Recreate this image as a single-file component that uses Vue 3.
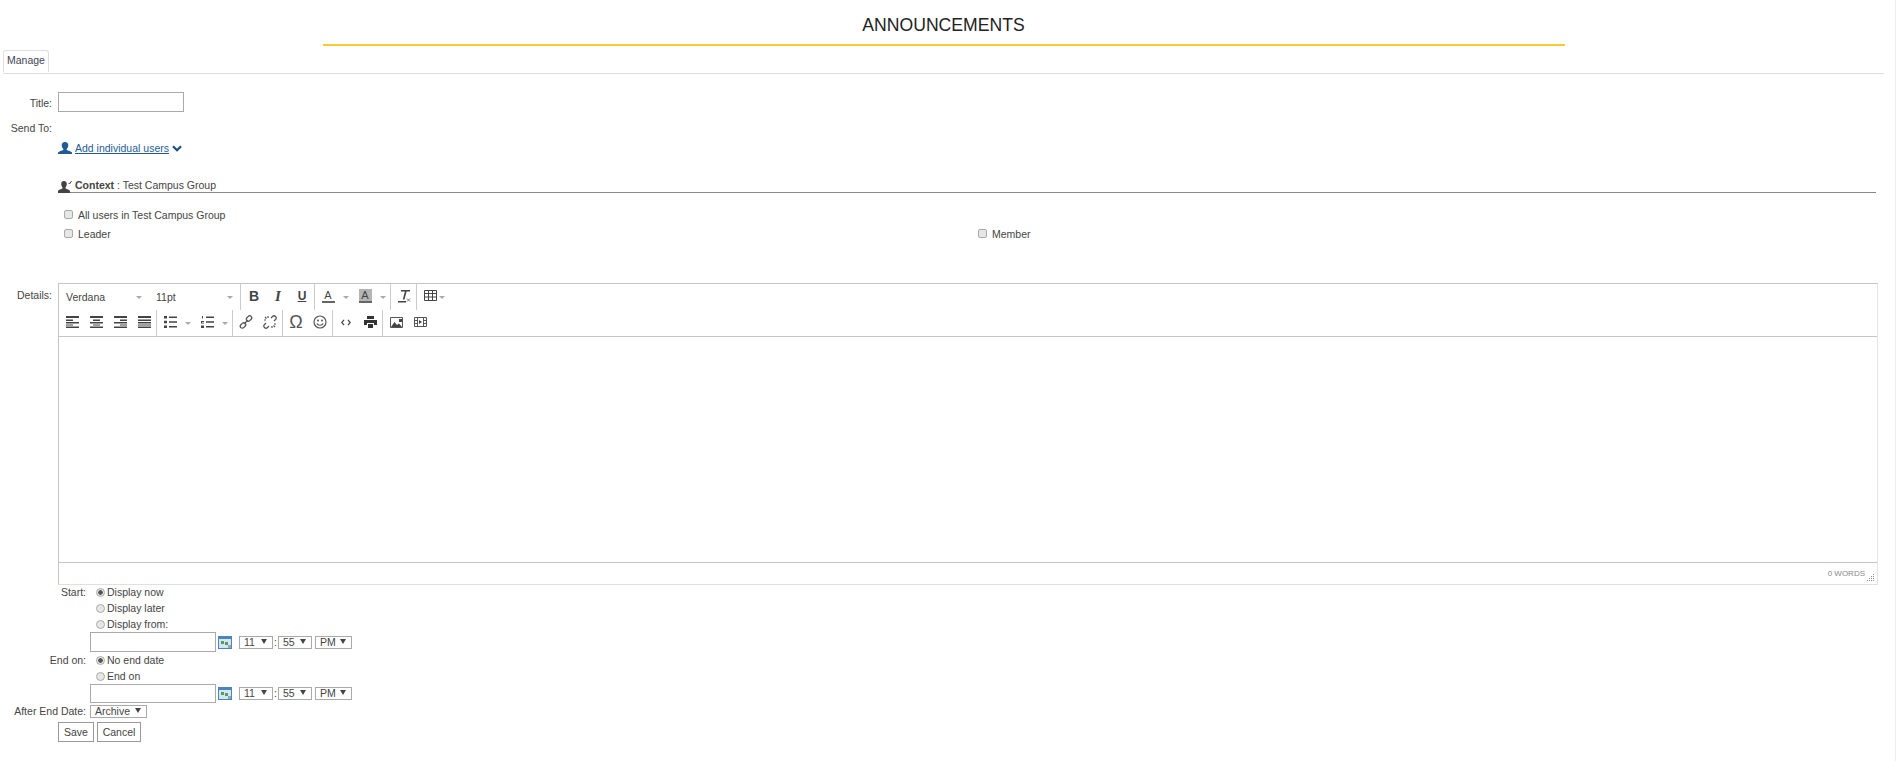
<script setup>
</script>

<template>
  <div class="page">
    <header class="head">
      <h1>ANNOUNCEMENTS</h1>
      <div class="rule"></div>
    </header>
    <nav class="tabs"><a class="tab">Manage</a></nav>

    <div class="row title-row">
      <label class="lab">Title:</label>
      <input class="title-input" type="text" />
    </div>
    <div class="row send-row"><label class="lab">Send To:</label></div>

    <div class="indent add-users">
      <svg class="ico-user" viewBox="0 0 14 12" width="14" height="12"><path fill="#1f5c94" d="M7 0c2.200 0 3.300 1.300 3.300 3.200 0 1.500-.8 3-1.600 3.700v1.100c1.500.6 4.300 1.200 5.300 2.600V12H0v-1.400c1-1.400 3.800-2 5.300-2.600V6.900C4.500 6.200 3.700 4.700 3.700 3.200 3.700 1.300 4.800 0 7 0z"/></svg>
      <a class="link">Add individual users</a>
      <svg class="chev" viewBox="0 0 10 7" width="10" height="7"><path fill="none" stroke="#1f4e79" stroke-width="2.200" d="M1 1.200l4 4 4-4"/></svg>
    </div>

    <div class="indent context">
      <svg class="ico-ctx" viewBox="0 0 14 13" width="14" height="13"><path fill="#444" d="M6 1c1.800 0 2.800 1.200 2.800 3 0 1.400-.6 2.800-1.300 3.400v1.100c1.400.6 3.800 1.100 4.500 2.400V13H0v-2.100c.7-1.300 3.100-1.800 4.500-2.400V7.400C3.800 6.800 3.200 5.400 3.200 4 3.200 2.200 4.200 1 6 1z"/><path fill="none" stroke="#444" stroke-width="1" d="M10.500 3l1 1 2-3"/></svg>
      <span><b>Context</b> : Test Campus Group</span>
    </div>

    <div class="checks">
      <label class="chk all"><input type="checkbox" /><span>All users in Test Campus Group</span></label>
      <div class="chk-grid">
        <label class="chk"><input type="checkbox" /><span>Leader</span></label>
        <label class="chk"><input type="checkbox" /><span>Member</span></label>
      </div>
    </div>

    <div class="row details-row">
      <label class="lab det">Details:</label>
      <div class="editor">
        <div class="tb">
          <div class="tb-row">
            <div class="grp fonts">
              <span class="fsel w-font">Verdana<i class="caret"></i></span>
              <span class="fsel w-size">11pt<i class="caret"></i></span>
            </div>
            <div class="grp">
              <button class="tbtn"><b class="g-b">B</b></button>
              <button class="tbtn"><em class="g-i">I</em></button>
              <button class="tbtn"><u class="g-u">U</u></button>
            </div>
            <div class="grp">
              <button class="tbtn"><span class="g-a">A</span></button><i class="caret c2"></i>
              <button class="tbtn"><span class="g-a bg">A</span></button><i class="caret c2"></i>
            </div>
            <div class="grp">
              <button class="tbtn">
                <svg viewBox="0 0 14 14" width="14" height="14"><path fill="#444" d="M4 1h9v1.500H9.600L7.500 10.500H5.800L7.900 2.500H4zM1 12h8v1.400H1z"/><path stroke="#777" stroke-width="1" d="M10 9.500l3 3m0-3l-3 3"/></svg>
              </button>
            </div>
            <div class="grp last">
              <button class="tbtn">
                <svg viewBox="0 0 13 12" width="13" height="12"><path fill="none" stroke="#444" d="M.5.500h12v10H.5zM.5 3.500h12M.5 7h12M4.500.500v10M8.500.500v10"/></svg>
              </button><i class="caret c3"></i>
            </div>
          </div>
          <div class="tb-row">
            <div class="grp">
              <button class="tbtn"><svg viewBox="0 0 13 12" width="13" height="12"><path fill="#444" d="M0 0h13v2H0zM0 3.500h7V5H0zM0 6h13v1.500H0zM0 8.500h7v1H0zM0 10.500h13V12H0z"/></svg></button>
              <button class="tbtn"><svg viewBox="0 0 13 12" width="13" height="12"><path fill="#444" d="M0 0h13v2H0zM3 3.500h7V5H3zM0 6h13v1.500H0zM3 8.500h7v1H3zM0 10.500h13V12H0z"/></svg></button>
              <button class="tbtn"><svg viewBox="0 0 13 12" width="13" height="12"><path fill="#444" d="M0 0h13v2H0zM6 3.500h7V5H6zM0 6h13v1.500H0zM6 8.500h7v1H6zM0 10.500h13V12H0z"/></svg></button>
              <button class="tbtn"><svg viewBox="0 0 13 12" width="13" height="12"><path fill="#444" d="M0 0h13v2H0zM0 3.500h13V5H0zM0 6h13v1.500H0zM0 8.500h13v1H0zM0 10.500h13V12H0z"/></svg></button>
            </div>
            <div class="grp">
              <button class="tbtn"><svg viewBox="0 0 13 12" width="13" height="12"><path fill="#444" d="M0 0h3v2.500H0zM5 .5h8V2H5zM0 4.800h3v2.500H0zM5 5.300h8v1.500H5zM0 9.500h3V12H0zM5 10h8v1.500H5z"/></svg></button><i class="caret c2"></i>
              <button class="tbtn"><svg viewBox="0 0 13 12" width="13" height="12"><path fill="#444" d="M1 0h1v2.500H1zM0 5h3v1H1v.8h2v.7H0zM0 9.500h3V12H0zM5 .5h8V2H5zM5 5.300h8v1.500H5zM5 10h8v1.500H5z"/></svg></button><i class="caret c2"></i>
            </div>
            <div class="grp">
              <button class="tbtn"><svg viewBox="0 0 14 14" width="14" height="14"><g fill="none" stroke="#555" stroke-width="1.300"><rect x="7" y="1.500" width="6" height="4" rx="2" transform="rotate(-45 10 3.500)"/><rect x="1" y="8.500" width="6" height="4" rx="2" transform="rotate(-45 4 10.500)"/><path d="M5 9l4-4"/></g></svg></button>
              <button class="tbtn"><svg viewBox="0 0 14 14" width="14" height="14"><g fill="none" stroke="#555" stroke-width="1.200"><path d="M8 3l1.500-1.500a2 2 0 0 1 3 3L11 6M6 11l-1.500 1.500a2 2 0 0 1-3-3L3 8"/><path d="M5 1v2M1 5h2M9 13v-2M13 9h-2M2 2l1.500 1.500M12 12l-1.500-1.500"/></g></svg></button>
            </div>
            <div class="grp">
              <button class="tbtn"><span class="g-om">Ω</span></button>
              <button class="tbtn"><svg viewBox="0 0 14 14" width="14" height="14"><circle cx="7" cy="7" r="6" fill="none" stroke="#555" stroke-width="1.200"/><circle cx="5" cy="5.500" r="1" fill="#555"/><circle cx="9" cy="5.500" r="1" fill="#555"/><path d="M3.800 8.500c1 2.300 5.400 2.300 6.400 0" fill="none" stroke="#555" stroke-width="1.200"/></svg></button>
            </div>
            <div class="grp">
              <button class="tbtn"><svg viewBox="0 0 10 7" width="10" height="7"><path fill="none" stroke="#444" stroke-width="1.200" d="M3 .8L.8 3.500 3 6.200M7 .8l2.200 2.700L7 6.200"/></svg></button>
              <button class="tbtn"><svg viewBox="0 0 13 12" width="13" height="12"><path fill="#333" d="M3 0h7v3H3zM0 4h13v5h-3V7H3v2H0zM4 8h5v4H4z"/></svg></button>
            </div>
            <div class="grp last">
              <button class="tbtn"><svg viewBox="0 0 13 11" width="13" height="11"><path fill="none" stroke="#555" d="M.5.500h12v10H.5z"/><path fill="#444" d="M1 10l3.500-5 2.500 3 2-1.500 3 3.500zM9 2h3v3H9z"/></svg></button>
              <button class="tbtn"><svg viewBox="0 0 13 10" width="13" height="10"><path fill="none" stroke="#555" d="M.5.500h12v9H.5zM3.500.500v9M9.500.500v9M.5 3.500h3M.5 6.500h3M9.500 3.500h3M9.500 6.500h3"/><path fill="#444" d="M5 3l3 2-3 2z"/></svg></button>
            </div>
          </div>
        </div>
        <div class="edit-area"></div>
        <div class="status">
          <span class="words">0 WORDS</span>
          <svg class="grip" viewBox="0 0 8 8" width="8" height="8"><path fill="#8a8a9a" d="M6 0h1v1H6zM4 2h1v1H4zM6 2h1v1H6zM2 4h1v1H2zM4 4h1v1H4zM6 4h1v1H6zM0 6h1v1H0zM2 6h1v1H2zM4 6h1v1H4zM6 6h1v1H6z"/></svg>
        </div>
      </div>
    </div>

    <div class="sched">
      <div class="s-row"><label class="s-lab">Start:</label><label class="rad"><input type="radio" name="st" checked />Display now</label></div>
      <div class="s-row"><span class="s-lab"></span><label class="rad"><input type="radio" name="st" />Display later</label></div>
      <div class="s-row"><span class="s-lab"></span><label class="rad"><input type="radio" name="st" />Display from:</label></div>
      <div class="date-row">
        <input class="date" type="text" />
        <svg class="cal" viewBox="0 0 14 13" width="14" height="13"><rect width="14" height="13" fill="#4a86ba"/><rect x="1" y="3" width="12" height="9" fill="#d3e6f5"/><path fill="#5f9a55" d="M3 5h3v3H3zM7 6h3v3H7z"/><path fill="#9aa4ac" d="M10 9h3v3h-3z"/></svg>
        <span class="sel s-11">11</span><span class="colon">:</span><span class="sel s-55">55</span><span class="sel s-pm">PM</span>
      </div>
      <div class="s-row"><label class="s-lab">End on:</label><label class="rad"><input type="radio" name="en" checked />No end date</label></div>
      <div class="s-row"><span class="s-lab"></span><label class="rad"><input type="radio" name="en" />End on</label></div>
      <div class="date-row second">
        <input class="date" type="text" />
        <svg class="cal" viewBox="0 0 14 13" width="14" height="13"><rect width="14" height="13" fill="#4a86ba"/><rect x="1" y="3" width="12" height="9" fill="#d3e6f5"/><path fill="#5f9a55" d="M3 5h3v3H3zM7 6h3v3H7z"/><path fill="#9aa4ac" d="M10 9h3v3h-3z"/></svg>
        <span class="sel s-11">11</span><span class="colon">:</span><span class="sel s-55">55</span><span class="sel s-pm">PM</span>
      </div>
      <div class="s-row after"><label class="s-lab">After End Date:</label><span class="sel s-arch">Archive</span></div>
      <div class="btns"><button class="btn">Save</button><button class="btn">Cancel</button></div>
    </div>
  </div>
</template>

<style scoped>
.page { width: 1896px; height: 761px; padding-right: 8px; border-right: 1px solid #eee; overflow: hidden; font-family: "Liberation Sans", Arial, sans-serif; font-size: 10.500px; color: #444; box-sizing: border-box; }
.head { height: 50px; box-sizing: border-box; padding-top: 14px; }
h1 { margin: 0; height: 30px; line-height: 22px; text-align: center; font-size: 17.600px; font-weight: 400; color: #222; }
.rule { width: 1242px; height: 2px; margin: 0 auto; background: #fdcb2f; }
.tabs { margin-left: 3px; height: 24px; border-bottom: 1px solid #ddd; margin-right: 3px; box-sizing: border-box; display: flex; }
.tab { width: 46px; height: 22px; box-sizing: border-box; border: 1px solid #ddd; border-bottom: 0; border-radius: 3px 3px 0 0; text-align: center; line-height: 18px; color: #445; }
.row { display: flex; }
.lab { width: 52px; text-align: right; flex: none; margin-right: 6px; }
.title-row { margin-top: 18px; height: 21px; }
.title-row .lab { line-height: 23px; }
.title-input { width: 126px; height: 20px; box-sizing: border-box; border: 1px solid #aaa; padding: 0; outline: 0; }
.send-row { margin-top: 8px; height: 14px; line-height: 14px; }
.indent { margin-left: 58px; display: flex; align-items: center; }
.add-users { margin-top: 6px; height: 14px; }
.link { margin-left: 3px; color: #1f5c94; text-decoration: underline; }
.chev { margin-left: 3px; }
.context { margin-top: 22px; height: 16px; width: 1818px; border-bottom: 1px solid #888; align-items: flex-end; box-sizing: border-box; }
.ico-ctx { margin-bottom: -1px; }
.context span { margin-left: 3px; line-height: 13px; }
.context b { font-weight: 700; }
.checks { margin-left: 64px; margin-top: 15px; }
.chk { display: flex; align-items: center; height: 14px; }
.chk input { appearance: none; width: 9px; height: 9px; margin: 0 5px 2px 0; border: 1px solid #aaa; border-radius: 2px; background: #e6e6e6; box-sizing: border-box; }
.chk-grid { display: grid; grid-template-columns: 914px 1fr; margin-top: 5px; }
.details-row { margin-top: 42px; }
.det { padding-top: 6px; }
.editor { width: 1820px; height: 302px; box-sizing: border-box; border: 1px solid #c5c5c5; border-right-color: #e6e6e6; border-bottom-color: #e0e0e0; display: flex; flex-direction: column; }
.tb { border-bottom: 1px solid #c5c5c5; height: 53px; box-sizing: border-box; flex: none; }
.tb-row { display: flex; height: 26px; }
.grp { display: flex; align-items: center; border-right: 1px solid #ccc; padding-left: 1px; height: 26px; }
.grp.last { border-right: 0; }
.fonts { padding: 0; }
.fsel { position: relative; padding-left: 7px; line-height: 26px; box-sizing: border-box; display: block; height: 26px; }
.w-font { width: 90px; }
.w-size { width: 91px; }
.fsel .caret { position: absolute; right: 7px; top: 12px; }
.caret { display: inline-block; width: 0; height: 0; border: 3px solid transparent; border-top: 3px solid #aaa; border-bottom: 0; }
.c2 { margin: 0 4px 0 3px; }
.c3 { margin-left: -3px; }
.tbtn { width: 24px; height: 22px; padding: 0 0 2px; border: 0; background: none; display: flex; align-items: center; justify-content: center; color: #444; font-family: "Liberation Sans", sans-serif; }
.g-b { font-size: 14px; font-weight: 700; }
.g-i { font-size: 15px; font-family: "Liberation Serif", serif; font-weight: 700; }
.g-u { font-size: 12px; font-weight: 700; }
.g-a { display: block; width: 13px; text-align: center; font-size: 11px; line-height: 12px; border-bottom: 2px solid #666; }
.g-a.bg { background: #b4b4b4; line-height: 12px; }
.g-om { font-size: 18px; line-height: 18px; color: #555; }
.edit-area { flex: 1; background: #fff; }
.status { height: 22px; box-sizing: border-box; flex: none; border-top: 1px solid #c5c5c5; display: flex; align-items: center; justify-content: flex-end; position: relative; font-size: 8px; color: #888; padding-right: 12px; }
.grip { position: absolute; right: 2px; bottom: 2px; }
.sched { margin-top: -1px; }
.s-row { display: flex; align-items: center; height: 16px; }
.s-lab { width: 86px; text-align: right; flex: none; margin-right: 9px; }
.rad { display: flex; align-items: center; }
.rad input { appearance: none; width: 9px; height: 9px; margin: 0 2px 0 1px; border: 1px solid #aaa; border-radius: 50%; background: #e6e6e6; box-sizing: border-box; }
.rad input:checked { background: radial-gradient(circle, #555 0 2px, #e6e6e6 2.500px); }
.date-row { display: flex; align-items: center; margin-left: 90px; height: 20px; }
.date-row.second { height: 19px; }
.date { width: 126px; height: 20px; box-sizing: border-box; border: 1px solid #aaa; padding: 0; outline: 0; }
.second .date { height: 19px; }
.cal { margin-left: 2px; margin-right: 7px; }
.sel { position: relative; display: block; height: 13px; box-sizing: border-box; border: 1px solid #aaa; line-height: 11px; padding-left: 4px; color: #444; }
.sel::after { content: ""; position: absolute; right: 5px; top: 2px; border: 3.500px solid transparent; border-top: 5px solid #444; border-bottom: 0; }
.s-11 { width: 34px; }
.s-55 { width: 34px; }
.s-pm { width: 37px; margin-left: 3px; }
.colon { width: 5px; text-align: center; line-height: 13px; }
.s-arch { width: 57px; margin-left: -5px; }
.after { height: 14px; margin-top: 1px; }
.btns { margin-left: 58px; margin-top: 4px; display: flex; gap: 3px; }
.btn { height: 20px; width: 36px; padding: 0; background: #fff; border: 1px solid #999; font: 10.500px "Liberation Sans", sans-serif; color: #444; }
.btn + .btn { width: 44px; }
</style>
